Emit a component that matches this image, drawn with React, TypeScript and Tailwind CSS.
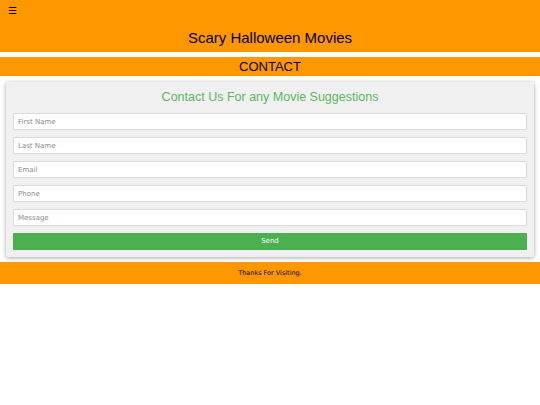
const FIELDS = ["First Name", "Last Name", "Email", "Phone", "Message"];

export default function App() {
  return (
    <div className="min-h-[405px] bg-white font-['Liberation_Sans',Arial,sans-serif] text-black">
      <header className="h-[52px] bg-[#ff9800] px-[8px] pt-[5px]">
        <div className="text-[10px] leading-[12px]">☰</div>
        <h1 className="mt-[11px] text-center text-[15px] leading-[20px]">Scary Halloween Movies</h1>
      </header>

      <nav className="mt-[5px] h-[19px] bg-[#ff9800] text-center text-[13px] leading-[19px]">CONTACT</nav>

      <main className="px-[6px] pt-[6px]">
        <div className="rounded-[2px] bg-[#f0f0f0] px-[7px] pb-[7px] pt-[7px] shadow-[0_1px_4px_rgba(0,0,0,0.35)]">
          <h2 className="text-center text-[12.5px] leading-[16px] text-[#5cb85c]">
            Contact Us For any Movie Suggestions
          </h2>
          <form className="mt-[8px] flex flex-col gap-[7px] font-['DejaVu_Sans',Verdana,sans-serif]">
            {FIELDS.map((f) => (
              <input
                key={f}
                placeholder={f}
                className="h-[17px] w-full rounded-[1px] border border-[#dcdcdc] bg-white px-[4px] text-[7px] outline-none placeholder:text-[#8a8a8a]"
              />
            ))}
            <button
              type="button"
              className="h-[17px] w-full rounded-[1px] bg-[#4caf50] text-center text-[7px] text-white"
            >
              Send
            </button>
          </form>
        </div>
      </main>

      <footer className="mt-[5px] h-[22px] bg-[#ff9800] text-center font-['DejaVu_Sans',Verdana,sans-serif] text-[6.5px] leading-[22px]">
        Thanks For Visiting.
      </footer>
    </div>
  );
}
